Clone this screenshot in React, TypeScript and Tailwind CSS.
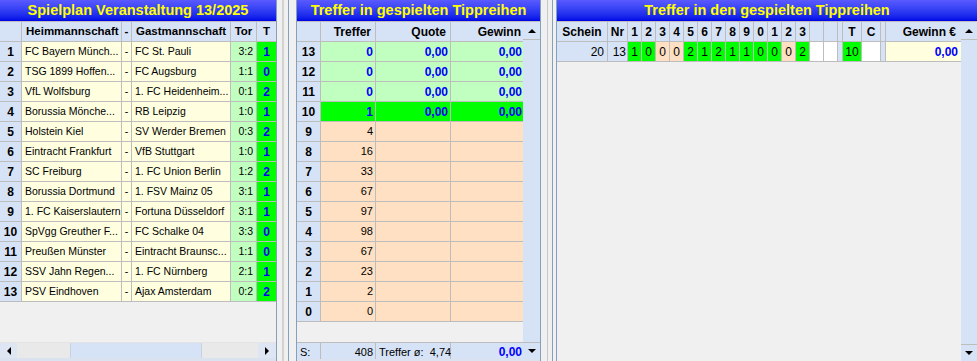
import React from 'react';

// Spielplan + Trefferauswertung (Tippreihen)

const games = [
  [1, 'FC Bayern Münch...', 'FC St. Pauli', '3:2', '1'],
  [2, 'TSG 1899 Hoffen...', 'FC Augsburg', '1:1', '0'],
  [3, 'VfL Wolfsburg', '1. FC Heidenheim...', '0:1', '2'],
  [4, 'Borussia Mönche...', 'RB Leipzig', '1:0', '1'],
  [5, 'Holstein Kiel', 'SV Werder Bremen', '0:3', '2'],
  [6, 'Eintracht Frankfurt', 'VfB Stuttgart', '1:0', '1'],
  [7, 'SC Freiburg', '1. FC Union Berlin', '1:2', '2'],
  [8, 'Borussia Dortmund', '1. FSV Mainz 05', '3:1', '1'],
  [9, '1. FC Kaiserslautern', 'Fortuna Düsseldorf', '3:1', '1'],
  [10, 'SpVgg Greuther F...', 'FC Schalke 04', '3:3', '0'],
  [11, 'Preußen Münster', 'Eintracht Braunsc...', '1:1', '0'],
  [12, 'SSV Jahn Regen...', '1. FC Nürnberg', '2:1', '1'],
  [13, 'PSV Eindhoven', 'Ajax Amsterdam', '0:2', '2'],
];

// Treffer-Verteilung 13..0
const hits = [
  { n: 13, t: '0', q: '0,00', g: '0,00', kind: 'win' },
  { n: 12, t: '0', q: '0,00', g: '0,00', kind: 'win' },
  { n: 11, t: '0', q: '0,00', g: '0,00', kind: 'win' },
  { n: 10, t: '1', q: '0,00', g: '0,00', kind: 'hit' },
  { n: 9, t: '4' },
  { n: 8, t: '16' },
  { n: 7, t: '33' },
  { n: 6, t: '67' },
  { n: 5, t: '97' },
  { n: 4, t: '98' },
  { n: 3, t: '67' },
  { n: 2, t: '23' },
  { n: 1, t: '2' },
  { n: 0, t: '0' },
];

const tips = ['1', '0', '0', '0', '2', '1', '2', '1', '1', '0', '0', '0', '2'];
const ok = [true, true, false, false, true, true, true, true, true, true, true, false, true];

const Up = () => <div className="h-0 w-0 border-x-[4px] border-b-[4px] border-x-transparent border-b-black" />;
const Down = () => <div className="h-0 w-0 border-x-[4px] border-t-[4px] border-x-transparent border-t-black" />;
const Left = () => <div className="h-0 w-0 border-y-[4px] border-r-[4px] border-y-transparent border-r-black" />;
const Right = () => <div className="h-0 w-0 border-y-[4px] border-l-[4px] border-y-transparent border-l-black" />;

function Title({ text }: { text: string }) {
  return (
    <div className="flex h-[21px] shrink-0 items-center justify-center bg-linear-to-b from-[#5a5aff] to-[#0000e6] text-[14.5px] font-bold text-[#ffff00]">
      {text}
    </div>
  );
}

function Spielplan() {
  return (
    <div className="flex h-[361px] w-[277px] shrink-0 flex-col border-r border-[#86a0bc]">
      <Title text="Spielplan Veranstaltung 13/2025" />
      <div className="grid auto-rows-[19px] grid-cols-[21px_99px_9px_98px_25px_19px] gap-px bg-[#bdbdbd] py-px">
        <div className="bg-[#d6e3f6]" />
        <div className="flex items-center bg-[#d6e3f6] pl-[4px] text-[11.5px] font-bold">Heimmannschaft</div>
        <div className="flex items-center justify-center bg-[#d6e3f6] text-[11.5px] font-bold">-</div>
        <div className="flex items-center bg-[#d6e3f6] pl-[4px] text-[11.5px] font-bold">Gastmannschaft</div>
        <div className="flex items-center justify-center bg-[#d6e3f6] text-[11.5px] font-bold">Tor</div>
        <div className="flex items-center justify-center bg-[#d6e3f6] text-[11.5px] font-bold">T</div>
        {games.map(([nr, heim, gast, tor, tip]) => (
          <React.Fragment key={nr}>
            <div className="flex items-center justify-center bg-[#d6e3f6] text-[12px] font-bold">{nr}</div>
            <div className="flex items-center overflow-hidden whitespace-nowrap bg-[#ffffe0] pl-[3px] text-[10.5px]">{heim}</div>
            <div className="flex items-center justify-center bg-[#ffffe0] text-[10.5px]">-</div>
            <div className="flex items-center overflow-hidden whitespace-nowrap bg-[#ffffe0] pl-[3px] text-[10.5px]">{gast}</div>
            <div className="flex items-center justify-end bg-[#c0ffc0] pr-[3px] text-[10.5px]">{tor}</div>
            <div className="flex items-center justify-center bg-[#00ff00] text-[12px] font-bold text-[#0000ff]">{tip}</div>
          </React.Fragment>
        ))}
      </div>
      <div className="flex-1" />
      {/* horizontale Scrollbar */}
      <div className="flex h-[16px] shrink-0 border-t border-[#e4e4e4]">
        <div className="flex w-[17px] items-center justify-center bg-[#dde6f2]">
          <Left />
        </div>
        <div className="w-[53px] bg-[#e9e9e9]" />
        <div className="w-[132px] border-x border-[#c6d2e2] bg-[#d6e3f6]" />
        <div className="flex-1 bg-[#e9e9e9]" />
        <div className="flex w-[18px] items-center justify-center bg-[#dde6f2]">
          <Right />
        </div>
      </div>
      <div className="h-[3px] shrink-0 bg-[#d9e2ee]" />
    </div>
  );
}

function Treffer() {
  return (
    <div className="flex h-[361px] w-[245px] shrink-0 flex-col border-x border-[#86a0bc]">
      <Title text="Treffer in gespielten Tippreihen" />
      <div className="flex flex-1">
        <div className="flex w-[226px] flex-col">
          <div className="grid auto-rows-[19px] grid-cols-[23px_54px_74px_72px] gap-px bg-[#bdbdbd] py-px">
            <div className="bg-[#d6e3f6]" />
            <div className="flex items-center justify-end bg-[#d6e3f6] pr-[4px] text-[12px] font-bold">Treffer</div>
            <div className="flex items-center justify-end bg-[#d6e3f6] pr-[4px] text-[12px] font-bold">Quote</div>
            <div className="flex items-center justify-end bg-[#d6e3f6] pr-[2px] text-[12px] font-bold">Gewinn</div>
            {hits.map((h) => {
              const bg = h.kind === 'win' ? 'bg-[#c0ffc0]' : h.kind === 'hit' ? 'bg-[#00ff00]' : 'bg-[#ffe0c2]';
              const txt = h.kind ? 'font-bold text-[#0000ff] text-[12px]' : 'text-[11px]';
              return (
                <React.Fragment key={h.n}>
                  <div className="flex items-center justify-center bg-[#d6e3f6] text-[12px] font-bold">{h.n}</div>
                  <div className={`flex items-center justify-end pr-[2px] ${bg} ${txt}`}>{h.t}</div>
                  <div className={`flex items-center justify-end pr-[2px] ${bg} ${txt}`}>{h.q}</div>
                  <div className={`flex items-center justify-end pr-[1px] ${bg} ${txt}`}>{h.g}</div>
                </React.Fragment>
              );
            })}
          </div>
          <div className="flex-1" />
          <div className="grid h-[17px] grid-cols-[23px_54px_74px_72px] gap-px bg-[#bdbdbd] pt-px">
            <div className="flex items-center bg-[#d6e3f6] pl-[3px] text-[11px]">S:</div>
            <div className="flex items-center justify-end bg-[#d6e3f6] pr-[2px] text-[11px]">408</div>
            <div className="flex items-center bg-[#d6e3f6] pl-[3px] text-[11px] whitespace-pre">Treffer ø:  4,74</div>
            <div className="flex items-center justify-end bg-[#d6e3f6] pr-[1px] text-[12px] font-bold text-[#0000ff]">0,00</div>
          </div>
          <div className="h-[2px] bg-[#d9e2ee]" />
        </div>
        {/* vertikale Scrollbar */}
        <div className="flex w-[17px] flex-col">
          <div className="h-px bg-[#bdbdbd]" />
          <div className="flex h-[18px] items-center justify-center border-b border-[#bdbdbd] bg-[#d6e3f6]">
            <Up />
          </div>
          <div className="flex-1 bg-[#d6e3f6]" />
          <div className="flex h-[17px] items-center justify-center border-t border-[#bdbdbd] bg-[#d6e3f6]">
            <Down />
          </div>
          <div className="h-[2px] bg-[#d9e2ee]" />
        </div>
      </div>
    </div>
  );
}

function Tippreihen() {
  const head = 'flex items-center justify-center bg-[#d6e3f6] text-[12px] font-bold';
  return (
    <div className="flex h-[361px] w-[421px] shrink-0 flex-col border-l border-[#86a0bc]">
      <Title text="Treffer in den gespielten Tippreihen" />
      <div className="flex flex-1">
        <div className="flex w-[404px] flex-col">
          <div className="grid auto-rows-[19px] grid-cols-[50px_19px_repeat(13,13px)_13px_13px_4px_18px_18px_4px_75px] gap-px bg-[#bdbdbd] py-px">
            <div className={head}>Schein</div>
            <div className={head}>Nr</div>
            {['1', '2', '3', '4', '5', '6', '7', '8', '9', '0', '1', '2', '3'].map((d, i) => (
              <div key={i} className={head}>{d}</div>
            ))}
            <div className="bg-[#d6e3f6]" />
            <div className="bg-[#d6e3f6]" />
            <div className="bg-[#d6e3f6]" />
            <div className={head}>T</div>
            <div className={head}>C</div>
            <div className="bg-[#d6e3f6]" />
            <div className="flex items-center justify-end bg-[#d6e3f6] pr-[5px] text-[12px] font-bold">Gewinn €</div>

            <div className="flex items-center justify-end bg-[#d6e3f6] pr-[3px] text-[12px]">20</div>
            <div className="flex items-center justify-end bg-[#d6e3f6] pr-[1px] text-[12px]">13</div>
            {tips.map((t, i) => (
              <div
                key={i}
                className={`flex items-center justify-center text-[12px] ${ok[i] ? 'bg-[#00ff00]' : 'bg-[#ffe0c2]'}`}
              >
                {t}
              </div>
            ))}
            <div className="bg-white" />
            <div className="bg-white" />
            <div className="bg-[#d6e3f6]" />
            <div className="flex items-center justify-center bg-[#00ff00] text-[12px]">10</div>
            <div className="bg-white" />
            <div className="bg-[#d6e3f6]" />
            <div className="flex items-center justify-end bg-[#ffffe0] pr-[3px] text-[12px] font-bold text-[#0000ff]">0,00</div>
          </div>
          <div className="flex-1" />
        </div>
        <div className="flex w-[16px] flex-col">
          <div className="h-px bg-[#bdbdbd]" />
          <div className="flex h-[18px] items-center justify-center border-b border-[#bdbdbd] bg-[#d6e3f6]">
            <Up />
          </div>
          <div className="flex-1 bg-[#d6e3f6]" />
          <div className="flex h-[17px] items-center justify-center border-t border-[#bdbdbd] bg-[#d6e3f6]">
            <Down />
          </div>
        </div>
      </div>
    </div>
  );
}

export default function App() {
  return (
    <div className="flex h-[361px] w-[977px] overflow-hidden bg-[#f0f0f0] font-['Liberation_Sans',Arial,sans-serif] text-black">
      <Spielplan />
      {/* Splitter */}
      <div className="flex w-[19px] shrink-0">
        <div className="w-[5px]" />
        <div className="w-[2px] bg-[#d2d2d2]" />
        <div className="w-[4px]" />
        <div className="w-px bg-[#86a0bc]" />
      </div>
      <Treffer />
      <div className="flex w-[15px] shrink-0">
        <div className="w-[6px]" />
        <div className="w-px bg-[#c8c8c8]" />
        <div className="w-[4px]" />
        <div className="w-px bg-[#86a0bc]" />
      </div>
      <Tippreihen />
    </div>
  );
}
